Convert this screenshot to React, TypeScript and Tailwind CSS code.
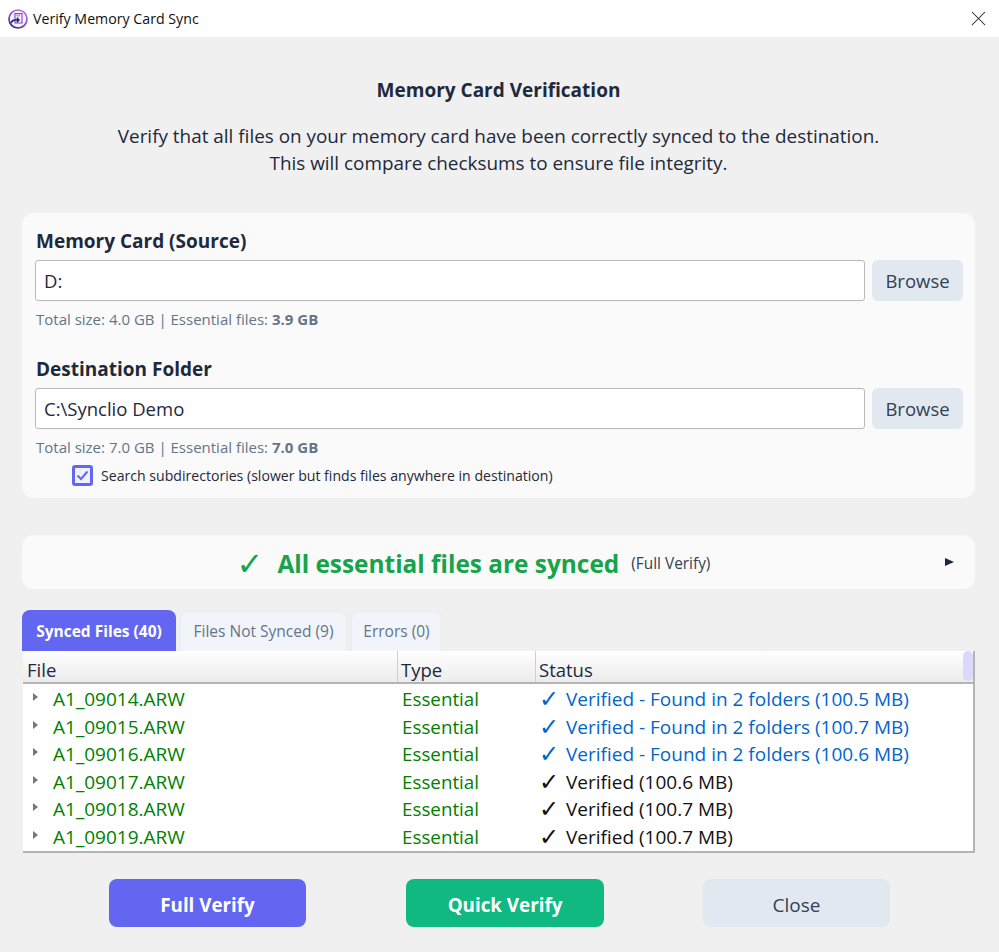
import { X } from 'lucide-react';

const rows = [
  { name: 'A1_09014.ARW', status: 'Verified - Found in 2 folders (100.5 MB)', multi: true },
  { name: 'A1_09015.ARW', status: 'Verified - Found in 2 folders (100.7 MB)', multi: true },
  { name: 'A1_09016.ARW', status: 'Verified - Found in 2 folders (100.6 MB)', multi: true },
  { name: 'A1_09017.ARW', status: 'Verified (100.6 MB)', multi: false },
  { name: 'A1_09018.ARW', status: 'Verified (100.7 MB)', multi: false },
  { name: 'A1_09019.ARW', status: 'Verified (100.7 MB)', multi: false },
];

function AppIcon() {
  return (
    <svg width="20" height="20" viewBox="0 0 20 20" fill="none">
      <defs>
        <linearGradient id="ring" x1="0.8" y1="0" x2="0.2" y2="1">
          <stop offset="0" stopColor="#cc68e4" />
          <stop offset="0.55" stopColor="#8050c8" />
          <stop offset="1" stopColor="#26286e" />
        </linearGradient>
      </defs>
      <circle cx="10" cy="10" r="9" stroke="url(#ring)" strokeWidth="1.7" fill="#f8f2fd" />
      <path d="M7 4.5h7v9.5H7z" stroke="#7a45bc" strokeWidth="1.1" fill="none" />
      <path d="M9 4.5v2.5h2.5V4.5" stroke="#a070d8" strokeWidth="0.9" fill="none" />
      <path d="M3 14c.8-2 2.2-3 4-3h4M8.8 8.8L11 11l-2.2 2.2" stroke="#23246e" strokeWidth="1.5" fill="none" />
    </svg>
  );
}

function PathField({ label, value, size, essential }: { label: string; value: string; size: string; essential: string }) {
  return (
    <div>
      <div className="pl-px text-[19px] leading-[24px] font-bold text-[#1e293b]">{label}</div>
      <div className="mt-[7px] flex gap-[7px]">
        <div className="flex h-[41px] flex-1 items-center rounded-[3px] border border-[#b8b8b8] bg-white px-2 pt-px text-[18.5px] text-[#1e293b]">
          {value}
        </div>
        <button className="h-[41px] w-[91px] rounded-md bg-[#e2e8f0] text-[18.5px] text-[#334155]">Browse</button>
      </div>
      <div className="mt-[8px] pl-px text-[15px] leading-[20px] text-[#64748b]">
        Total size: {size} | Essential files: <span className="font-bold">{essential}</span>
      </div>
    </div>
  );
}

export default function App() {
  return (
    <div className="flex h-[952px] w-[999px] flex-col overflow-hidden bg-[#f0f0f0] font-['Open_Sans',sans-serif]">
      {/* Title bar */}
      <div className="flex h-[37px] shrink-0 items-center bg-white pl-[8px] pr-[8px]">
        <AppIcon />
        <span className="ml-[5px] flex-1 text-[14.2px] text-[#111]">Verify Memory Card Sync</span>
        <X className="h-[25px] w-[25px] text-[#222]" strokeWidth={1} />
      </div>

      <div className="flex flex-1 flex-col pl-[22px] pr-[24px]">
        {/* Heading */}
        <h1 className="mt-[40px] text-center text-[19px] leading-[26px] font-bold text-[#1e293b]">Memory Card Verification</h1>
        <p className="mt-[20px] text-center text-[18.9px] leading-[27px] text-[#1e293b]">
          Verify that all files on your memory card have been correctly synced to the destination.
          <br />
          This will compare checksums to ensure file integrity.
        </p>

        {/* Paths */}
        <section className="mt-[36px] h-[285px] rounded-xl bg-[#fafafa] pl-[13px] pr-[12px] pt-[16px]">
          <PathField label="Memory Card (Source)" value="D:" size="4.0 GB" essential="3.9 GB" />
          <div className="mt-[28px]">
            <PathField label="Destination Folder" value="C:\Synclio Demo" size="7.0 GB" essential="7.0 GB" />
          </div>
          <label className="mt-[8px] ml-[37px] flex items-center gap-[8px]">
            <span className="flex h-[21px] w-[21px] items-center justify-center rounded-[3px] border-[3px] border-[#6366f1] bg-[#eef0fe]">
              <svg width="13" height="11" viewBox="0 0 13 11" fill="none">
                <path d="M1.5 5.5l3.5 3.5 6.5-7.5" stroke="#6366f1" strokeWidth="2" />
              </svg>
            </span>
            <span className="text-[14.1px] text-[#1e293b]">Search subdirectories (slower but finds files anywhere in destination)</span>
          </label>
        </section>

        {/* Result */}
        <section className="mt-[37px] flex h-[54px] items-center rounded-xl bg-[#fafafa] pr-[21px]">
          <div className="flex flex-1 items-center justify-center pr-[20px] pt-[3px]">
            <span className="font-['DejaVu_Sans',sans-serif] text-[32px] leading-[34px] font-bold text-[#16a34a]">✓</span>
            <span className="ml-[14px] text-[24.4px] leading-[34px] font-bold text-[#16a34a]">All essential files are synced</span>
            <span className="ml-[12px] text-[15.4px] text-[#334155]">(Full Verify)</span>
          </div>
          <span className="h-0 w-0 border-y-[4px] border-l-[9px] border-y-transparent border-l-[#1e293b]" />
        </section>

        {/* Tabs */}
        <div className="mt-[21px] flex h-[41px] items-end gap-[4px]">
          <div className="flex h-[41px] w-[154px] items-center justify-center rounded-t-lg bg-[#6366f1] pt-[2px] text-[15.5px] font-bold text-white">
            Synced Files (40)
          </div>
          <div className="flex h-[40px] w-[167px] items-center justify-center rounded-t-lg border border-b-0 border-[#e6ebf5] bg-[#f1f5f9] pt-[1px] text-[15.5px] text-[#64748b]">
            Files Not Synced (9)
          </div>
          <div className="flex h-[40px] w-[91px] items-center justify-center rounded-t-lg border border-b-0 border-[#e6ebf5] bg-[#f1f5f9] pt-[1px] text-[15.5px] text-[#64748b]">
            Errors (0)
          </div>
        </div>

        {/* File table */}
        <div className="ml-[1px] h-[202px] w-[952px] overflow-hidden border-r-[2px] border-b-[2px] border-r-[#b4b4b4] border-b-[#b4b4b4] bg-white">
          <div className="relative flex h-[33px] border-b-[2px] border-[#b4b4b4] bg-gradient-to-b from-white to-[#ececec] pr-[10px] text-[18.5px] leading-[38px] text-[#1e293b]">
            <div className="w-[375px] border-r border-[#cfcfcf] pl-[4px]">File</div>
            <div className="w-[138px] border-r border-[#cfcfcf] pl-[3px]">Type</div>
            <div className="flex-1 pl-[3px]">Status</div>
            <div className="absolute top-0 right-0 h-[30px] w-[10px] rounded-md bg-[#d8d9fb]" />
          </div>
          {rows.map((row) => (
            <div key={row.name} className="flex h-[27.5px] items-center pt-[3px] text-[19px] text-[#008000]">
              <div className="flex w-[375px] items-center pl-[10px]">
                <span className="mb-[4px] h-0 w-0 border-y-[4.5px] border-l-[5px] border-y-transparent border-l-[#777]" />
                <span className="ml-[15px]">{row.name}</span>
              </div>
              <div className="w-[138px] pl-[4px] text-[18.8px]">Essential</div>
              <div className={`flex items-center pl-[3px] ${row.multi ? 'text-[#0066cc]' : 'text-[#111]'}`}>
                <span className="w-[27px] font-['DejaVu_Sans',sans-serif] text-[24px] leading-[24px] font-bold">✓</span>
                <span>{row.status}</span>
              </div>
            </div>
          ))}
        </div>

        {/* Actions */}
        <div className="mt-[26px] flex pl-[87px]">
          <button className="h-[48px] w-[197px] rounded-lg bg-[#6366f1] pt-[5px] text-[18.8px] font-bold text-white">Full Verify</button>
          <button className="ml-[100px] h-[48px] w-[198px] rounded-lg bg-[#10b981] pt-[5px] text-[18.8px] font-bold text-white">Quick Verify</button>
          <button className="ml-[99px] h-[48px] w-[187px] rounded-lg bg-[#e2e8f0] pt-[5px] text-[19px] text-[#334155]">Close</button>
        </div>
      </div>
    </div>
  );
}
